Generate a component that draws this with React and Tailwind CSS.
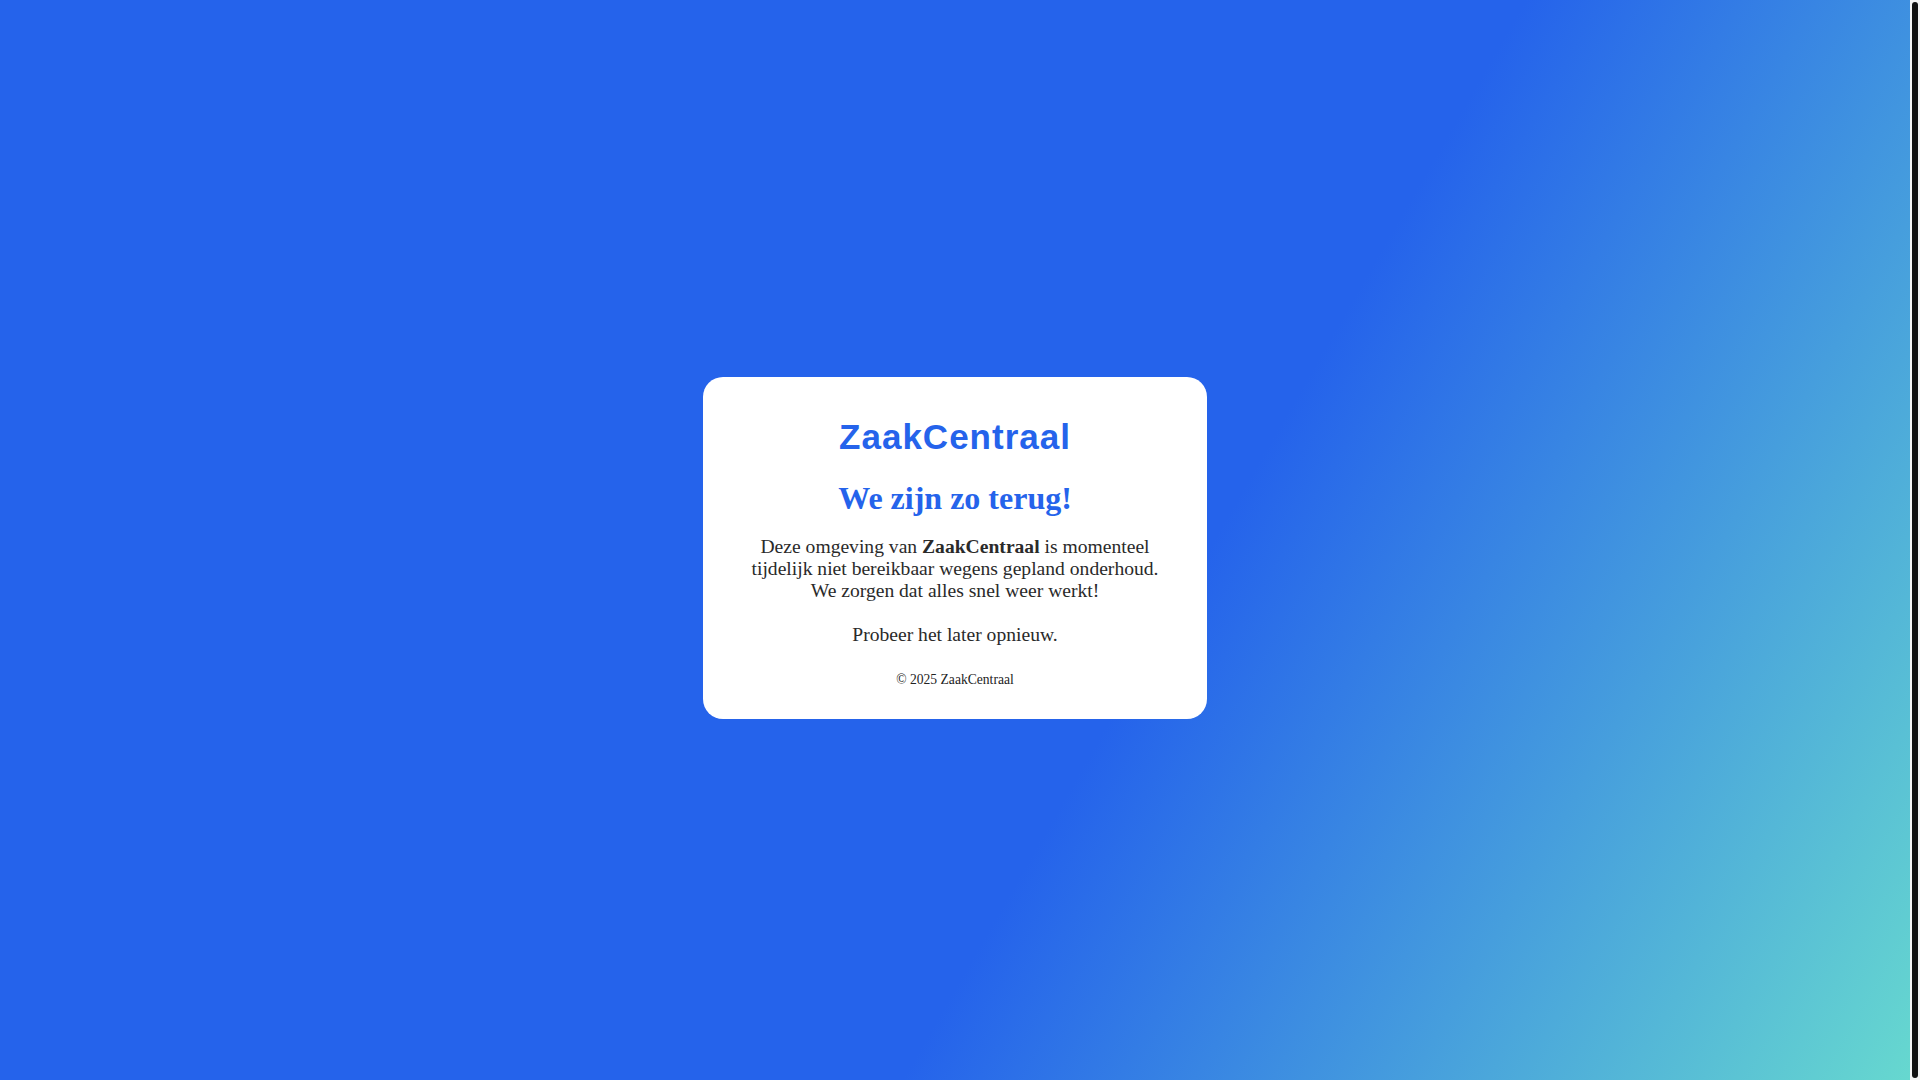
export default function App() {
  return (
    <div
      className="h-screen overflow-hidden flex"
      style={{ fontFamily: '"Liberation Serif", "Times New Roman", serif' }}
    >
      <div className="flex-1 min-w-0">
        <div className="box-content min-h-screen p-2 flex items-center justify-center bg-[linear-gradient(120deg,#2563eb_60%,#67d9cf_100%)]">
          <div className="w-[504px] bg-white rounded-[20px] px-[40px] pt-[40px] pb-[31px] text-center">
            <h1
              className="text-[35px] font-bold tracking-[1px] text-[#2563eb] leading-[39px]"
              style={{ fontFamily: '"Liberation Sans", Arial, sans-serif' }}
            >
              ZaakCentraal
            </h1>
            <h2 className="mt-[25px] text-[32px] font-bold text-[#2563eb] leading-[35px]">
              We zijn zo terug!
            </h2>
            <p className="mt-[20px] text-[19.6px] leading-[22px] text-[#2a2a2a]">
              Deze omgeving van <strong>ZaakCentraal</strong> is momenteel tijdelijk niet bereikbaar wegens gepland onderhoud. We zorgen dat alles snel weer werkt!
              <br />
              <br />
              Probeer het later opnieuw.
            </p>
            <div className="mt-[26px] text-[13.6px] leading-[16px] text-[#222]">
              © 2025 ZaakCentraal
            </div>
          </div>
        </div>
      </div>
      <div className="w-[10px] shrink-0 bg-[#f4f4f4] px-[2px] py-[2px]">
        <div className="h-full rounded-full bg-[#111]"></div>
      </div>
    </div>
  );
}
